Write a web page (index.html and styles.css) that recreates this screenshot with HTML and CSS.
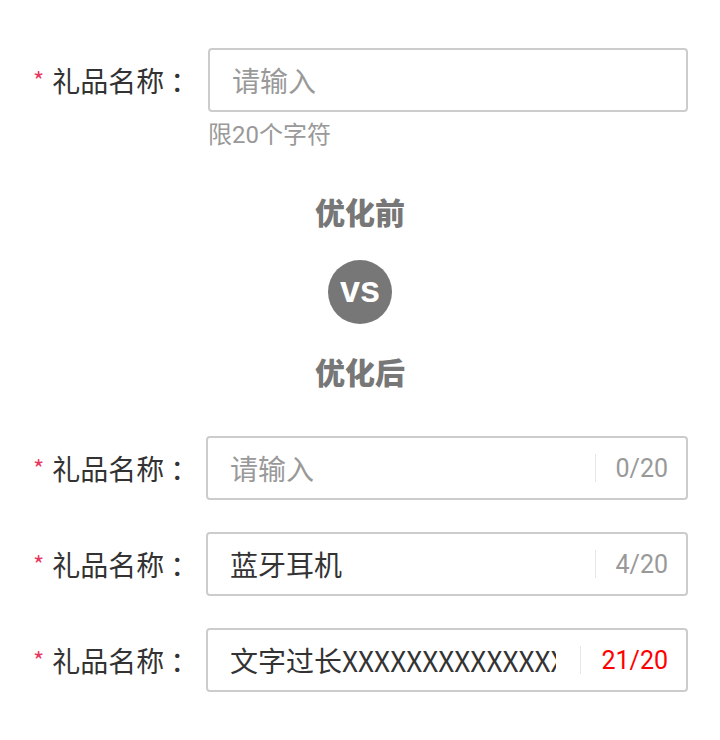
FILE: index.html
```html
<html>
    <head>
        <meta charset="utf-8">
        <link rel="stylesheet" href="styles.css">
    </head>
    <body>
        <div class="page">
            <div class="field">
                <label class="label"><span class="star">*</span>礼品名称<span class="colon">：</span></label>
                <div class="box box-old">
                    <span class="value placeholder">请输入</span>
                </div>
            </div>
            <div class="hint">限20个字符</div>

            <div class="compare">
                <div class="caption">优化前</div>
                <div class="vs">vs</div>
                <div class="caption">优化后</div>
            </div>

            <div class="field field-new">
                <label class="label"><span class="star">*</span>礼品名称<span class="colon">：</span></label>
                <div class="box">
                    <span class="value placeholder">请输入</span>
                    <span class="divider"></span>
                    <span class="counter">0/20</span>
                </div>
            </div>

            <div class="field field-new">
                <label class="label"><span class="star">*</span>礼品名称<span class="colon">：</span></label>
                <div class="box">
                    <span class="value">蓝牙耳机</span>
                    <span class="divider"></span>
                    <span class="counter">4/20</span>
                </div>
            </div>

            <div class="field field-new">
                <label class="label"><span class="star">*</span>礼品名称<span class="colon">：</span></label>
                <div class="box">
                    <span class="value">文字过长XXXXXXXXXXXXXXXX</span>
                    <span class="divider"></span>
                    <span class="counter over">21/20</span>
                </div>
            </div>
        </div>
    </body>
</html>
```

FILE: styles.css
```css
body{
    margin: 0;
    background: #fff;
    font-family: "Noto Sans CJK SC", "Noto Sans", sans-serif;
    color: #333;
}
.page{
    width: 720px;
    padding-top: 48px;
}
.field{
    display: flex;
    align-items: center;
    padding-left: 33px;
    padding-right: 32px;
}
.field-new{
    margin-top: 32px;
}
.compare + .field-new{
    margin-top: 45px;
}
.label{
    width: 173px;
    flex: none;
    font-size: 28px;
    line-height: 40px;
    color: #333;
    white-space: nowrap;
}
.star{
    color: #e8385f;
    font-size: 24px;
    margin-right: 8px;
    vertical-align: 2px;
}
.colon{
    margin-left: 6px;
}
.box{
    flex: 1;
    display: flex;
    align-items: center;
    height: 64px;
    box-sizing: border-box;
    border: 2px solid #ccc;
    border-radius: 4px;
    padding: 0 18px 0 22px;
    min-width: 0;
}
.box-old{
    margin-left: 2px;
}
.value{
    flex: 1;
    min-width: 0;
    font-size: 28px;
    color: #333;
    white-space: nowrap;
    overflow: hidden;
}
.placeholder{
    color: #999;
}
.divider{
    flex: none;
    width: 1px;
    height: 28px;
    background: #e6e6e6;
    margin: 0 20px 0 24px;
}
.counter{
    flex: none;
    font-family: Roboto, "Noto Sans CJK SC", sans-serif;
    font-size: 25px;
    color: #999;
}
.counter.over{
    color: #f00;
}
.hint{
    margin-top: 8px;
    padding-left: 208px;
    font-family: Roboto, "Noto Sans CJK SC", sans-serif;
    font-size: 24px;
    line-height: 30px;
    color: #999;
}
.compare{
    display: flex;
    flex-direction: column;
    align-items: center;
    margin-top: 41px;
}
.caption{
    font-size: 30px;
    line-height: 40px;
    font-weight: 900;
    color: #777;
}
.vs{
    width: 64px;
    height: 64px;
    border-radius: 50%;
    background: #777;
    color: #fff;
    font-family: "Liberation Sans", sans-serif;
    font-weight: bold;
    font-size: 36px;
    line-height: 60px;
    text-align: center;
    margin: 29px 0 27px;
}
```
